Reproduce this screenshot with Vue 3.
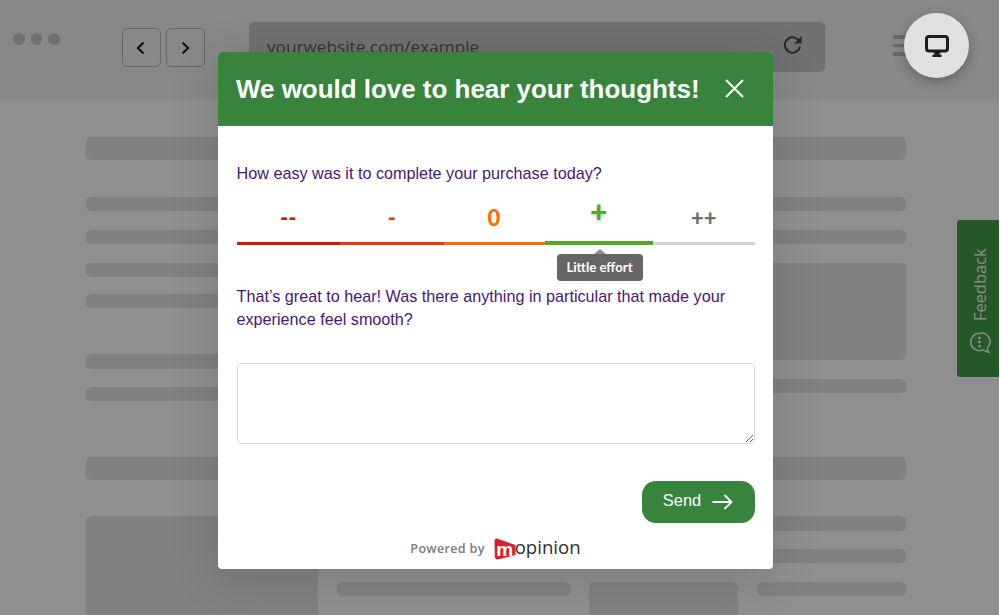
<script setup>
const scale = [
  { label: '--', width: 103.5, color: '#c81b08', text: '#c81b08' },
  { label: '-', width: 103.5, color: '#e63c0c', text: '#e63c0c' },
  { label: '0', width: 101, color: '#ff6a00', text: '#ff6a00' },
  { label: '+', width: 108.5, color: '#55a82a', text: '#55a82a', selected: true },
  { label: '++', width: 101.5, color: '#d2d2d2', text: '#707070' }
]
</script>

<template>
  <div class="site">
    <header class="chrome">
      <div class="dots"><i></i><i></i><i></i></div>
      <div class="navs">
        <span class="nav">
          <svg width="12" height="16" viewBox="0 0 12 16"><path d="M8.5 2.5 3 8l5.5 5.5" fill="none" stroke="#1e1e1e" stroke-width="2.2"/></svg>
        </span>
        <span class="nav">
          <svg width="12" height="16" viewBox="0 0 12 16"><path d="M3.5 2.5 9 8l-5.5 5.5" fill="none" stroke="#1e1e1e" stroke-width="2.2"/></svg>
        </span>
      </div>
      <div class="url">
        <span>yourwebsite.com/example</span>
        <svg class="reload" width="22" height="22" viewBox="0 0 22 22">
          <path d="M17.6 9.2A7.6 7.6 0 1 0 18 13.4" fill="none" stroke="#4a4a4a" stroke-width="2"/>
          <path d="M19.6 3v7.6H12z" fill="#4a4a4a"/>
        </svg>
      </div>
      <div class="burger"><i></i><i></i><i></i></div>
    </header>

    <main class="content">
      <div class="ph h23"></div>
      <div class="ph h14 mt37"></div>
      <div class="ph h14 mt19"></div>
      <div class="split mt19">
        <div class="col-left">
          <div class="ph h14"></div>
          <div class="ph h14 mt17"></div>
          <div class="ph h15 mt46"></div>
          <div class="ph h14 mt18"></div>
        </div>
        <div class="col-right">
          <div class="ph h97"></div>
          <div class="ph h14 mt19"></div>
        </div>
      </div>
      <div class="ph h23 mt56"></div>
      <div class="bottom mt36">
        <div class="ph block"></div>
        <div class="bottom-main">
          <div class="ph h15"></div>
          <div class="ph h14 mt18"></div>
          <div class="cols mt19">
            <div class="ph h14 c1"></div>
            <div class="ph tall c2"></div>
            <div class="ph h14 c3"></div>
          </div>
        </div>
      </div>
    </main>

    <aside class="tab">
      <span class="tab-text">Feedback</span>
      <svg width="22" height="24" viewBox="0 0 22 24">
        <path d="M10.5 2.2a8.7 8.7 0 1 0 3.6 16.6c1.600 1.500 3.400 2.300 5.700 2.500-1-1.200-1.600-2.600-1.500-4.300a8.700 8.700 0 0 0-7.800-14.800z" fill="none" stroke="#f4f8f4" stroke-width="1.500"/>
        <circle cx="10.500" cy="6.800" r="1.400" fill="#f4f8f4"/>
        <circle cx="10.500" cy="11" r="1.400" fill="#f4f8f4"/>
        <circle cx="10.500" cy="15.200" r="1.400" fill="#f4f8f4"/>
      </svg>
    </aside>

    <div class="overlay"></div>

    <section class="modal">
      <div class="modal-head">
        <h1>We would love to hear your thoughts!</h1>
        <svg class="close" width="19" height="19" viewBox="0 0 19 19">
          <path d="M1 1l17 17M18 1L1 18" stroke="#fff" stroke-width="2" fill="none"/>
        </svg>
      </div>
      <div class="modal-body">
        <p class="q first">How easy was it to complete your purchase today?</p>
        <div class="scale">
          <div
            v-for="item in scale"
            :key="item.label"
            class="opt"
            :class="{ selected: item.selected }"
            :style="{ width: item.width + 'px', borderColor: item.color, color: item.text }"
          >
            <span class="opt-label">{{ item.label }}</span>
            <div v-if="item.selected" class="tip">Little effort</div>
          </div>
        </div>
        <p class="q second">That’s great to hear! Was there anything in particular that made your experience feel smooth?</p>
        <textarea class="area"></textarea>
        <div class="actions">
          <button class="send" type="button">
            <span class="send-text">Send</span>
            <svg width="21" height="16" viewBox="0 0 21 16">
              <path d="M0.500 8H19.500M12.500 1l7 7-7 7" fill="none" stroke="#fff" stroke-width="1.800"/>
            </svg>
          </button>
        </div>
        <div class="powered">
          <span class="by">Powered by</span>
          <span class="logo">
            <svg class="logo-mark" width="22" height="22" viewBox="0 0 22 22">
              <path d="M2 0.200 21.500 7V17L3 21.700 0.800 19.500 0.500 2z" fill="#d2232f"/>
            </svg>
            <span class="logo-m">m</span><span class="logo-rest">opinion</span>
          </span>
        </div>
      </div>
    </section>

    <button class="fab" type="button">
      <svg width="24" height="22" viewBox="0 0 24 22">
        <rect x="1.500" y="1.500" width="21" height="14.500" rx="2.500" fill="none" stroke="#1d1d1d" stroke-width="3"/>
        <path d="M8 17h8l-2 2.500h2.500V22h-9v-2.500H10z" fill="#1d1d1d"/>
      </svg>
    </button>
  </div>
</template>

<style>
html, body { margin: 0; overflow: hidden; background: #fff; }
</style>

<style scoped>
.site {
  position: relative;
  width: 999px;
  height: 615px;
  overflow: hidden;
  background: #ffffff;
  font-family: "Liberation Sans", Arial, sans-serif;
}
.chrome {
  height: 100px;
  background: #f3f3f3;
  display: flex;
  align-items: flex-start;
}
.dots { display: flex; gap: 6px; margin: 33px 0 0 13px; }
.dots i { width: 11.500px; height: 11.500px; border-radius: 50%; background: #c8c8c8; }
.navs { display: flex; gap: 5px; margin: 28px 0 0 62px; }
.nav {
  width: 37px; height: 37px;
  border: 1px solid #b8b8b8;
  border-radius: 5px;
  display: flex; align-items: center; justify-content: center;
}
.url {
  margin: 22px 0 0 44px;
  width: 576px; height: 50px;
  border-radius: 5px;
  background: #c9c9c9;
  display: flex; align-items: flex-start; justify-content: space-between;
  padding: 0 21px 0 18.500px;
  box-sizing: border-box;
  color: #5f5f5f;
  font: 17.200px/50px "Open Sans", sans-serif;
}
.reload { margin-top: 11px; }
.burger { display: flex; flex-direction: column; gap: 5px; margin: 35px 0 0 68px; }
.burger i { width: 14px; height: 3.500px; background: #bdbdbd; }

.content { width: 820px; margin: 37px 0 0 86px; }
.ph { background: #e6e6e6; border-radius: 5px; }
.h14 { height: 14px; }
.h15 { height: 15px; }
.h23 { height: 23px; }
.h97 { height: 97px; }
.mt17 { margin-top: 17px; }
.mt18 { margin-top: 18px; }
.mt19 { margin-top: 19px; }
.mt36 { margin-top: 36px; }
.mt37 { margin-top: 37px; }
.mt46 { margin-top: 46px; }
.mt56 { margin-top: 56px; }
.split { display: flex; gap: 20px; }
.col-left { width: 400px; }
.col-right { flex: 1; }
.bottom { display: flex; gap: 19px; }
.block { width: 232px; height: 200px; }
.bottom-main { flex: 1; }
.cols { display: flex; gap: 19px; }
.c1 { width: 233px; }
.c2 { width: 149px; }
.c3 { width: 149px; }
.tall { height: 60px; }

.tab {
  position: absolute;
  left: 957px; top: 220px;
  width: 60px; height: 157px;
  box-sizing: border-box;
  background: #3f9e49;
  border-radius: 3px 0 0 3px;
  display: flex; flex-direction: column; align-items: flex-start;
  padding: 29px 0 0 12px;
  gap: 10px;
  color: #f4f8f4;
}
.tab-text {
  writing-mode: vertical-rl;
  transform: rotate(180deg);
  font: 500 16.400px/22px "Open Sans", sans-serif;
  height: 72px;
  text-align: left;
}

.overlay {
  position: absolute;
  inset: 0;
  background: rgba(0, 0, 0, 0.44);
}

.modal {
  position: absolute;
  left: 218px; top: 52px;
  width: 555px; height: 517px;
  background: #fff;
  border-radius: 4px;
  overflow: visible;
  box-shadow: 0 8px 50px rgba(0, 0, 0, 0.14);
}
.modal-head {
  height: 74px;
  background: #38843c;
  border-radius: 4px 4px 0 0;
  display: flex; align-items: center; justify-content: space-between;
  padding: 0 29px 0 18px;
}
.modal-head h1 {
  margin: 0;
  font: bold 25.950px/32px "Liberation Sans", Arial, sans-serif;
  color: #fff;
  white-space: nowrap;
}
.close { display: block; margin-top: -2px; }
.modal-body { padding: 0 18.500px 0 18.500px; }
.q {
  margin: 0;
  font-size: 16.200px;
  line-height: 23px;
  color: #47177a;
}
.first { padding-top: 36px; }
.scale { display: flex; margin-top: 11px; height: 49px; align-items: flex-end; }
.opt {
  position: relative;
  box-sizing: border-box;
  height: 49px;
  border-bottom: 3.500px solid;
  text-align: center;
  font: 900 22px/30px Lato, sans-serif;
  padding-top: 7px;
}
.opt-label { display: block; }
.selected { border-bottom-width: 4px; padding-top: 0; height: 49.500px; margin-bottom: -0.250px; }
.selected .opt-label { font-size: 30px; text-shadow: 0 2px 3px rgba(0, 0, 0, 0.18); }
.tip {
  position: absolute;
  left: 12px; top: 58px;
  width: 86px; height: 27px;
  background: #666;
  border-radius: 4px;
  color: #fff;
  font: 700 13.200px/27px Lato, sans-serif;
  text-align: center;
}
.tip::before {
  content: "";
  position: absolute;
  left: 37px; top: -5px;
  border: 6px solid transparent;
  border-top: 0;
  border-bottom: 5px solid #8a8a8a;
}
.second { margin-top: 40px; }
.area {
  display: block;
  box-sizing: border-box;
  width: 518px; height: 81px;
  margin: 32px 0 0 0;
  border: 1px solid #d9d9d9;
  border-radius: 4px;
  background: #fff;
  outline: none;
}
.actions { display: flex; justify-content: flex-end; margin-top: 37px; }
.send {
  width: 113px; height: 42px;
  border: 0; border-radius: 14px;
  background: #38843c;
  color: #fff;
  font: 16.400px "Liberation Sans", Arial, sans-serif;
  display: flex; align-items: center; justify-content: center; gap: 11px;
  padding: 0;
}
.send-text { margin-top: -3px; }
.powered {
  display: flex; align-items: center; justify-content: center;
  gap: 9px;
  margin-top: 14px;
  height: 24px;
  padding-right: 0;
}
.by {
  font: 600 12.600px/18px "Open Sans", sans-serif;
  color: #7b7b7b;
  letter-spacing: .3px;
}
.logo { position: relative; display: flex; align-items: center; height: 24px; }
.logo-mark { display: block; margin-top: -1px; }
.logo-m {
  position: absolute;
  left: 1.500px; top: 0;
  width: 19px;
  text-align: center;
  font: bold 19px/25px "Liberation Sans", sans-serif;
  color: #fff;
}
.logo-rest {
  font: 500 18.600px/24px "Open Sans", sans-serif;
  color: #2e2e2e;
  margin: -4px 0 0 -1px;
}

.fab {
  position: absolute;
  left: 904px; top: 13px;
  width: 65px; height: 65px;
  border: 0; border-radius: 50%;
  background: #e1e1e1;
  box-shadow: 0 4px 12px rgba(0, 0, 0, 0.25);
  display: flex; align-items: center; justify-content: center;
  padding: 0;
}
</style>
